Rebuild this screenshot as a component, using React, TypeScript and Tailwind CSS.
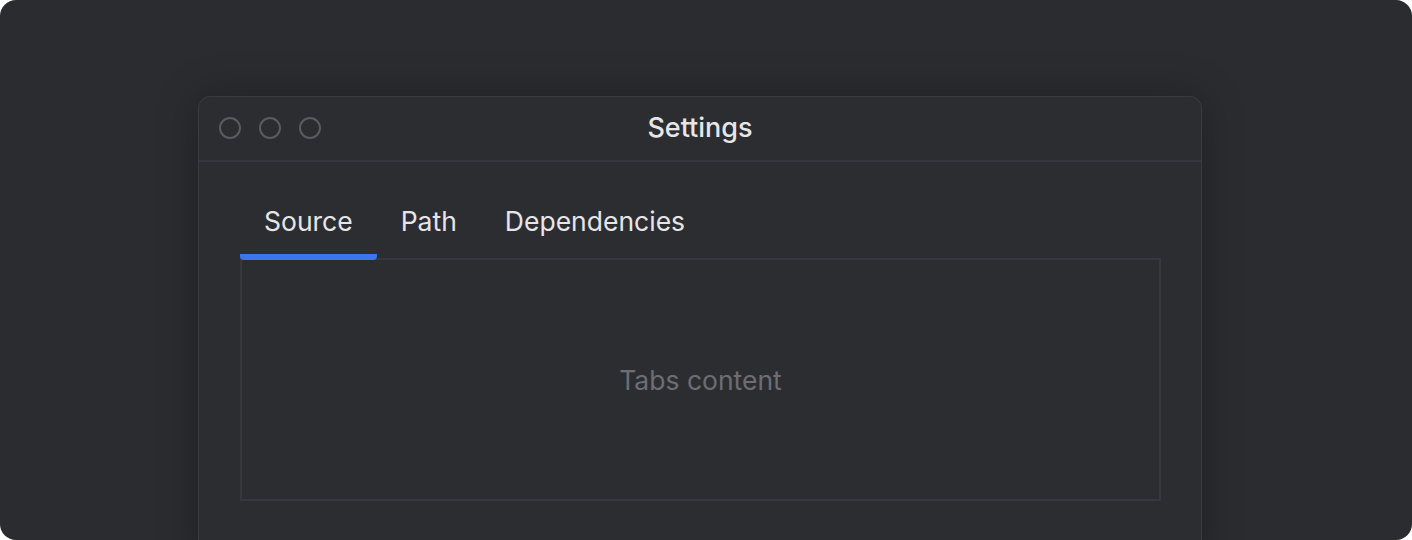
import { useState } from "react";

const tabs = ["Source", "Path", "Dependencies"];

function TrafficLight() {
  return <span className="block h-[22px] w-[22px] rounded-full border-2 border-[#5a5b60]" />;
}

export default function App() {
  const [active, setActive] = useState(0);

  return (
    <div className="h-[540px] w-[1412px] bg-white" style={{ fontFamily: "Inter, 'Noto Sans', sans-serif" }}>
      <div className="h-full w-full overflow-hidden rounded-2xl bg-[#2b2c30] pt-[96px]">
        <div className="ml-[198px] h-[480px] w-[1004px] rounded-t-xl border border-[#3a3b40] bg-[#2c2d31] shadow-[0_0_40px_rgba(0,0,0,0.25)]">
          <div className="relative flex h-[65px] items-center border-b-2 border-[#37383d] px-[20px] pb-[2px]">
            <div className="flex gap-[18px]">
              <TrafficLight />
              <TrafficLight />
              <TrafficLight />
            </div>
            <div className="absolute inset-0 flex items-center justify-center pl-[-1px] text-[27px] font-medium text-[#e6e6e8]">
              Settings
            </div>
          </div>

          <div className="pl-[41px] pr-[40px] pt-[43px]">
            <div className="flex border-b-2 border-[#37383d]">
              {tabs.map((t, i) => (
                <button
                  key={t}
                  onClick={() => setActive(i)}
                  className={`-mb-[2px] border-b-[6px] px-6 pb-[17px] text-[26.5px] leading-[32px] text-[#e6e6e8] ${
                    active === i ? "rounded-sm border-[#3b76ef]" : "border-transparent"
                  }`}
                >
                  {t}
                </button>
              ))}
            </div>
            <div className="flex h-[241px] items-center justify-center border-x-2 border-b-2 border-[#37383d] pt-[2px] text-[26.5px] text-[#6c6e74]">
              Tabs content
            </div>
          </div>
        </div>
      </div>
    </div>
  );
}
